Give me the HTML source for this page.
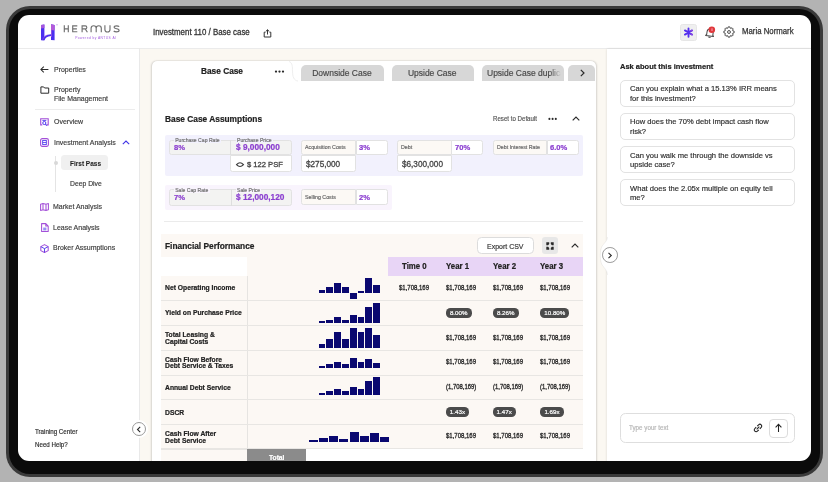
<!DOCTYPE html>
<html><head><meta charset="utf-8">
<style>
*{box-sizing:border-box;margin:0;padding:0}
html,body{width:828px;height:482px;overflow:hidden;background:#b3b3b3;font-family:"Liberation Sans",sans-serif;color:#2e2e2e}
.a{position:absolute}
.t{position:absolute;white-space:nowrap;line-height:1;-webkit-text-stroke:0.17px currentColor}
.t[style*="font-weight:700"]{-webkit-text-stroke:0.22px currentColor}
#ring{left:6px;top:6px;width:817px;height:471px;background:#3a3a3a;border-radius:24px}
#bezel{left:9px;top:9px;width:811px;height:465px;background:#0b0b0b;border-radius:21px}
#screen{left:0;top:0;width:828px;height:482px;background:#fff;will-change:transform;clip-path:inset(15px 17px 21px 18px round 11px)}
svg{position:absolute;overflow:visible}
</style></head><body>
<div id="ring" class="a"></div>
<div id="bezel" class="a"></div>
<div id="screen" class="a">
<div class="a" style="left:18px;top:48px;width:793px;height:1px;background:#ebebeb"></div>
<svg style="left:0;top:0" width="130" height="48" viewBox="0 0 130 48">
    <path d="M41 24.9 L44.4 24.4 L44.4 40.3 L41 40.3 Z" fill="#4b2ff0"/>
    <path d="M41 24.9 L44.4 24.4 L44.4 28 L41 28.4 Z" fill="#a655dc"/>
    <path d="M51 24.3 L54.6 24.9 L54.6 40.2 L51 40 Z" fill="#4b2ff0"/>
    <path d="M51 24.3 L54.6 24.9 L54.6 30.5 L51 30 Z" fill="#b45ad8"/>
    <path d="M51 30 L52 30 L52 37 L51 37 Z" fill="#8a4fe6"/>
    <path d="M42.3 40.2 C44 36.2 46.3 34.5 51 34.3 L51 35.9 C47.2 36.1 45.6 37.6 44.4 40.3 Z" fill="#4b2ff0"/>
    <path d="M42.5 39.6 C44 36.8 45.5 35.6 47.5 35" fill="none" stroke="#a655dc" stroke-width="0.6"/>
    <circle cx="57" cy="24.8" r="0.7" fill="#c9a5ea"/>
    <g fill="none" stroke="#707070" stroke-width="1.15" stroke-linecap="butt">
      <path d="M64.3 25.3 V32.3 M68.3 25.3 V32.3 M64.3 28.8 H68.3"/>
      <path d="M77.3 25.9 H72.7 V31.7 H77.3 M72.7 28.8 H76.9"/>
      <path d="M82.1 32.3 V25.9 H85.3 A1.5 1.5 0 0 1 85.3 28.9 H82.1 M85.2 28.9 L87.4 32.3"/>
      <path d="M91.1 32.3 V28.3 A2.55 2.55 0 0 1 96.2 28.3 V32.3 M96.2 28.3 A2.55 2.55 0 0 1 101.3 28.3 V32.3"/>
      <path d="M104.9 25.3 V29.4 A2.55 2.55 0 0 0 110 29.4 V25.3"/>
      <path d="M119.2 26.6 C118.6 26 117.7 25.8 116.5 25.8 C115 25.8 114.1 26.4 114.1 27.3 C114.1 28.4 115.2 28.6 116.6 28.8 C118.2 29 119.1 29.5 119.1 30.5 C119.1 31.4 118.2 31.9 116.5 31.9 C115.3 31.9 114.3 31.6 113.7 31"/>
    </g>
  </svg>
<div class="t" style="left:75.2px;top:36.6px;font-size:3.3px;color:#a45ee0;letter-spacing:0.42px;-webkit-text-stroke:0">Powered by ANTUS AI</div>
<div class="t" style="left:152.7px;top:28px;font-size:8.37px;transform:scaleX(0.9434);transform-origin:0 0;color:#333;-webkit-text-stroke:0.28px #333">Investment 110 / Base case</div>
<svg style="left:263px;top:28.5px" width="9" height="9" viewBox="0 0 9 9">
    <path d="M2.5 3.2 H1.2 V8 H7.8 V3.2 H6.5" fill="none" stroke="#333" stroke-width="1"/>
    <path d="M4.5 5.5 V0.8 M2.8 2.4 L4.5 0.8 L6.2 2.4" fill="none" stroke="#333" stroke-width="1"/>
  </svg>
<div class="a" style="left:680px;top:24px;width:17px;height:16.5px;background:#efefef;border-radius:2.5px;border:1px solid #e6e6e6"></div>
<svg style="left:682.6px;top:27px" width="11" height="11" viewBox="0 0 11 11">
    <g stroke="#5530ee" stroke-width="1.85" stroke-linecap="round">
      <path d="M5.5 1.3 V9.7 M1.9 3.4 L9.1 7.6 M1.9 7.6 L9.1 3.4"/>
    </g>
    <path d="M8 4 L9.1 3.4 M8 7 L9.1 7.6" stroke="#9048de" stroke-width="1.3" stroke-linecap="round"/>
  </svg>
  <svg style="left:703.5px;top:25.5px" width="13" height="13" viewBox="0 0 13 13">
    <g transform="rotate(8 6 7)">
    <path d="M2 10 H10 L9.1 8.8 V6.2 A3.1 3.1 0 0 0 2.9 6.2 V8.8 Z" fill="none" stroke="#444" stroke-width="1" stroke-linejoin="round"/>
    <path d="M4.9 11.3 H7.1" stroke="#444" stroke-width="1"/>
    </g>
    <circle cx="7.8" cy="3.7" r="3.3" fill="#e0393b"/>
    <path d="M8 2.3 V5" stroke="#fbd" stroke-width="0.8"/>
  </svg>
  <svg style="left:723.4px;top:26.1px" width="12" height="12" viewBox="0 0 12 12">
    <path d="M9.82 4.82 L11.13 5.17 L11.13 6.83 L9.82 7.18 L9.54 7.87 L10.22 9.04 L9.04 10.22 L7.87 9.54 L7.18 9.82 L6.83 11.13 L5.17 11.13 L4.82 9.82 L4.13 9.54 L2.96 10.22 L1.78 9.04 L2.46 7.87 L2.18 7.18 L0.87 6.83 L0.87 5.17 L2.18 4.82 L2.46 4.13 L1.78 2.96 L2.96 1.78 L4.13 2.46 L4.82 2.18 L5.17 0.87 L6.83 0.87 L7.18 2.18 L7.87 2.46 L9.04 1.78 L10.22 2.96 L9.54 4.13 Z" fill="none" stroke="#444" stroke-width="0.95" stroke-linejoin="round"/>
    <circle cx="6" cy="6" r="1.45" fill="none" stroke="#444" stroke-width="0.95"/>
  </svg>
<div class="t" style="left:741.9px;top:28px;font-size:8.27px;transform:scaleX(0.9434);transform-origin:0 0;color:#333;-webkit-text-stroke:0.25px #333">Maria Normark</div>
<div class="a" style="left:139px;top:48px;width:1px;height:414px;background:#e9e9e9"></div>
<svg style="left:39.5px;top:66px" width="9" height="7" viewBox="0 0 9 7">
    <path d="M8.4 3.5 H1 M3.8 0.6 L0.9 3.5 L3.8 6.4" fill="none" stroke="#2a2a2a" stroke-width="1.05"/>
  </svg>
<svg style="left:39.5px;top:86px" width="10" height="8" viewBox="0 0 10 8">
    <path d="M0.9 0.9 H3.6 L4.6 2 H8.7 V7.2 H0.9 Z" fill="none" stroke="#2a2a2a" stroke-width="1" stroke-linejoin="round"/>
  </svg>
<svg style="left:40px;top:117.5px" width="9" height="9" viewBox="0 0 9 9">
    <path d="M2.3 6.9 H0.7 V0.7 H8.2 V6.9 H6.9" fill="none" stroke="#a34fd8" stroke-width="1.1"/>
    <path d="M2.4 2.4 H6.3" stroke="#4a34ec" stroke-width="0.9"/>
    <circle cx="4.3" cy="5" r="1.55" fill="none" stroke="#4a34ec" stroke-width="0.95"/>
    <path d="M5.4 6.1 L6.9 7.7" stroke="#4a34ec" stroke-width="1.05"/>
  </svg>
<svg style="left:40px;top:138px" width="9" height="9" viewBox="0 0 9 9">
    <rect x="0.6" y="0.6" width="7.8" height="7.8" rx="1.6" fill="none" stroke="#a34fd8" stroke-width="1.1"/>
    <rect x="2.7" y="2.4" width="3.6" height="4.2" fill="none" stroke="#4a34ec" stroke-width="0.85"/><path d="M2.7 4.5 H6.3" stroke="#4a34ec" stroke-width="0.8"/>
  </svg>
<svg style="left:121.5px;top:140px" width="8" height="5" viewBox="0 0 8 5">
    <path d="M0.8 4.2 L4 1 L7.2 4.2" fill="none" stroke="#3f33e6" stroke-width="1.1"/>
  </svg>
<svg style="left:40px;top:202.5px" width="9" height="8" viewBox="0 0 9 8">
    <path d="M0.6 1.2 L3 0.6 L6 1.2 L8.4 0.6 V6.8 L6 7.4 L3 6.8 L0.6 7.4 Z M3 0.6 V6.8 M6 1.2 V7.4" fill="none" stroke="#a34fd8" stroke-width="1.05" stroke-linejoin="round"/>
  </svg>
<svg style="left:40.5px;top:222.5px" width="8" height="9" viewBox="0 0 8 9">
    <path d="M0.6 0.6 H4.8 L7.2 3 V8.4 H0.6 Z M4.8 0.6 V3 H7.2" fill="none" stroke="#a34fd8" stroke-width="1.05" stroke-linejoin="round"/>
    <path d="M2.2 5.2 H5.4 M2.2 6.8 H5.4" stroke="#4a34ec" stroke-width="0.8"/>
  </svg>
<svg style="left:40px;top:243.5px" width="9" height="9" viewBox="0 0 9 9">
    <path d="M4.5 0.6 L8.2 2.6 V6.6 L4.5 8.5 L0.8 6.6 V2.6 Z" fill="none" stroke="#a34fd8" stroke-width="1.05" stroke-linejoin="round"/>
    <path d="M0.9 2.7 L4.5 4.6 L8.1 2.7 M4.5 4.6 V8.4" fill="none" stroke="#4a34ec" stroke-width="0.9"/>
  </svg>
<div class="t" style="left:53.5px;top:66px;font-size:7.42px;transform:scaleX(0.9434);transform-origin:0 0;color:#3d3d3d">Properties</div>
<div class="t" style="left:53.5px;top:86px;font-size:7.42px;transform:scaleX(0.9434);transform-origin:0 0;color:#3d3d3d">Property</div>
<div class="t" style="left:53.5px;top:95px;font-size:7.42px;transform:scaleX(0.9434);transform-origin:0 0;color:#3d3d3d">File Management</div>
<div class="a" style="left:35px;top:109px;width:100px;height:1px;background:#ececec"></div>
<div class="t" style="left:53.5px;top:118px;font-size:7.42px;transform:scaleX(0.9434);transform-origin:0 0;color:#3d3d3d">Overview</div>
<div class="t" style="left:53.5px;top:139px;font-size:7.42px;transform:scaleX(0.9434);transform-origin:0 0;color:#3d3d3d">Investment Analysis</div>
<div class="a" style="left:55px;top:155.5px;width:1px;height:36px;background:#e4e4e4"></div>
<div class="a" style="left:53.5px;top:161px;width:4px;height:4px;border-radius:50%;background:#d8d8d8"></div>
<div class="a" style="left:61.3px;top:155.3px;width:47.2px;height:15.2px;border-radius:3.5px;background:#f0f0f0"></div>
<div class="t" style="left:69.9px;top:161px;font-size:6.89px;transform:scaleX(0.9434);transform-origin:0 0;font-weight:700;color:#222;-webkit-text-stroke:0.05px #222">First Pass</div>
<div class="t" style="left:69.9px;top:180px;font-size:7.21px;transform:scaleX(0.9434);transform-origin:0 0;color:#3a3a3a">Deep Dive</div>
<div class="t" style="left:53.2px;top:203px;font-size:7.42px;transform:scaleX(0.9434);transform-origin:0 0;color:#3d3d3d">Market Analysis</div>
<div class="t" style="left:53.2px;top:224px;font-size:7.42px;transform:scaleX(0.9434);transform-origin:0 0;color:#3d3d3d">Lease Analysis</div>
<div class="t" style="left:53.2px;top:244px;font-size:7.42px;transform:scaleX(0.9434);transform-origin:0 0;color:#3d3d3d">Broker Assumptions</div>
<div class="t" style="left:35.1px;top:429px;font-size:6.57px;transform:scaleX(0.9434);transform-origin:0 0;">Training Center</div>
<div class="t" style="left:35.1px;top:442px;font-size:6.57px;transform:scaleX(0.9434);transform-origin:0 0;">Need Help?</div>
<div class="a" style="left:140px;top:49px;width:467px;height:413px;background:#fbf8f2"></div>
<div class="a" style="left:152px;top:61px;width:443.5px;height:420px;background:#fff;border-radius:5px;box-shadow:-1px 0 2px rgba(0,0,0,0.14),1px 0 2px rgba(0,0,0,0.14),0 0 1px rgba(0,0,0,0.06)"></div>
<svg style="left:285px;top:61px" width="16" height="21" viewBox="0 0 16 21"><path d="M4 0.5 C7.5 1.5 7.5 6 7.5 10 C7.5 16 9 19.5 13 20" fill="none" stroke="#efefef" stroke-width="1"/></svg>
<div class="t" style="left:200.9px;top:67px;font-size:8.8px;transform:scaleX(0.9434);transform-origin:0 0;font-weight:700;color:#222">Base Case</div>
<svg style="left:270px;top:66px" width="20" height="12" viewBox="0 0 20 12"><g fill="#2a2a2a"><circle cx="6" cy="5.6" r="1.15"/><circle cx="9.5" cy="5.6" r="1.15"/><circle cx="13" cy="5.6" r="1.15"/></g></svg>
<div class="a" style="left:301px;top:64.5px;width:83.0px;height:16.5px;background:#d7d7d7;border-radius:5px 5px 0 0;overflow:hidden"><div class="t" style="left:11.2px;top:4.5px;font-size:8.5px;color:#484848;">Downside Case</div></div>
<div class="a" style="left:391.6px;top:64.5px;width:82.4px;height:16.5px;background:#d7d7d7;border-radius:5px 5px 0 0;overflow:hidden"><div class="t" style="left:16.3px;top:4.5px;font-size:8.5px;color:#484848;">Upside Case</div></div>
<div class="a" style="left:482px;top:64.5px;width:82.3px;height:16.5px;background:#d7d7d7;border-radius:5px 5px 0 0;overflow:hidden"><div class="t" style="left:5.0px;top:4.5px;font-size:8.5px;color:#484848;-webkit-mask-image:linear-gradient(90deg,#000 85%,transparent 100%);width:74px;overflow:hidden;">Upside Case duplicate</div></div>
<div class="a" style="left:568.2px;top:64.5px;width:27.1px;height:16.5px;background:#d7d7d7;border-radius:5px 5px 0 0;overflow:hidden"></div>
<svg style="left:578.5px;top:68.5px" width="7" height="8" viewBox="0 0 7 8"><path d="M1.8 0.9 L5 4 L1.8 7.1" fill="none" stroke="#2a2a2a" stroke-width="1.2"/></svg>
<div class="t" style="left:164.8px;top:115px;font-size:8.86px;transform:scaleX(0.9434);transform-origin:0 0;font-weight:700;color:#222">Base Case Assumptions</div>
<div class="t" style="left:493.2px;top:116px;font-size:6.51px;transform:scaleX(0.9434);transform-origin:0 0;color:#555">Reset to Default</div>
<svg style="left:545px;top:114px" width="16" height="10" viewBox="0 0 16 10"><g fill="#2a2a2a"><circle cx="4.4" cy="4.9" r="1.05"/><circle cx="7.6" cy="4.9" r="1.05"/><circle cx="10.8" cy="4.9" r="1.05"/></g></svg>
<svg style="left:571.5px;top:116px" width="8" height="5" viewBox="0 0 8 5"><path d="M0.7 4.4 L4 1.1 L7.3 4.4" fill="none" stroke="#2a2a2a" stroke-width="1.15"/></svg>
<div class="a" style="left:164.7px;top:135px;width:418.5px;height:41px;background:#f2f1fd;border-radius:2px"></div>
<div class="a" style="left:165px;top:185px;width:227px;height:24.5px;background:#f9f4fd;border-radius:2px"></div>
<div class="a" style="left:168.5px;top:139.6px;width:123.7px;height:15.8px;background:#f3f3f2;border:0.8px solid #e2e2e2;border-radius:2.5px"></div>
<div class="a" style="left:230.2px;top:139.6px;width:0.8px;height:15.8px;background:#dedede"></div>
<div class="a" style="left:230.2px;top:155px;width:62.0px;height:17.3px;background:#fff;border:0.8px solid #e2e2e2;border-radius:0 0 2.5px 2.5px"></div>
<div class="t" style="left:174.0px;top:138px;font-size:5.1px;color:#6e6e6e;background:#f2f1fd;padding:0 1.2px">Purchase Cap Rate</div>
<div class="t" style="left:235.8px;top:138px;font-size:5.1px;color:#6e6e6e;background:#f2f1fd;padding:0 1.2px">Purchase Price</div>
<div class="t" style="left:173.9px;top:144px;font-size:8.06px;transform:scaleX(0.9434);transform-origin:0 0;font-weight:700;color:#8b3fd0">8%</div>
<div class="t" style="left:235.8px;top:143px;font-size:8.8px;transform:scaleX(0.9434);transform-origin:0 0;font-weight:700;color:#8b3fd0">$ 9,000,000</div>
<svg style="left:235.8px;top:161.6px" width="8" height="6" viewBox="0 0 8 6"><path d="M0.5 2.6 Q4 -1.2 7.5 2.6 Q4 6.4 0.5 2.6 Z" fill="none" stroke="#3a3a3a" stroke-width="1.1" stroke-linejoin="miter"/></svg>
<div class="t" style="left:247px;top:161px;font-size:8.06px;transform:scaleX(0.9434);transform-origin:0 0;color:#454545;-webkit-text-stroke:0.3px #454545">$ 122 PSF</div>
<div class="a" style="left:301px;top:139.6px;width:55.4px;height:15.8px;background:#fcf9f5;border:0.8px solid #e2e2e2;border-radius:2.5px 0 0 2.5px"></div>
<div class="a" style="left:355.6px;top:139.6px;width:32.1px;height:15.8px;background:#fff;border:0.8px solid #e2e2e2;border-radius:0 2.5px 2.5px 0"></div>
<div class="t" style="left:304.9px;top:145px;font-size:5.62px;transform:scaleX(0.9434);transform-origin:0 0;color:#666">Acquisition Costs</div>
<div class="t" style="left:359.3px;top:144px;font-size:8.06px;transform:scaleX(0.9434);transform-origin:0 0;font-weight:700;color:#8b3fd0">3%</div>
<div class="a" style="left:301px;top:154.6px;width:55.4px;height:17.7px;background:#fff;border:0.8px solid #e2e2e2;border-radius:0 0 2.5px 2.5px"></div>
<div class="t" style="left:306px;top:160px;font-size:8.69px;transform:scaleX(0.9434);transform-origin:0 0;color:#454545;-webkit-text-stroke:0.3px #454545">$275,000</div>
<div class="a" style="left:396.8px;top:139.6px;width:54.9px;height:15.8px;background:#fcf9f5;border:0.8px solid #e2e2e2;border-radius:2.5px 0 0 2.5px"></div>
<div class="a" style="left:450.9px;top:139.6px;width:32.6px;height:15.8px;background:#fff;border:0.8px solid #e2e2e2;border-radius:0 2.5px 2.5px 0"></div>
<div class="t" style="left:400.7px;top:145px;font-size:5.62px;transform:scaleX(0.9434);transform-origin:0 0;color:#666">Debt</div>
<div class="t" style="left:454.59999999999997px;top:144px;font-size:8.06px;transform:scaleX(0.9434);transform-origin:0 0;font-weight:700;color:#8b3fd0">70%</div>
<div class="a" style="left:396.8px;top:154.6px;width:54.9px;height:17.7px;background:#fff;border:0.8px solid #e2e2e2;border-radius:0 0 2.5px 2.5px"></div>
<div class="t" style="left:401.8px;top:160px;font-size:8.69px;transform:scaleX(0.9434);transform-origin:0 0;color:#454545;-webkit-text-stroke:0.3px #454545">$6,300,000</div>
<div class="a" style="left:492.7px;top:139.6px;width:54.6px;height:15.8px;background:#fcf9f5;border:0.8px solid #e2e2e2;border-radius:2.5px 0 0 2.5px"></div>
<div class="a" style="left:546.5px;top:139.6px;width:32.6px;height:15.8px;background:#fff;border:0.8px solid #e2e2e2;border-radius:0 2.5px 2.5px 0"></div>
<div class="t" style="left:496.59999999999997px;top:145px;font-size:5.62px;transform:scaleX(0.9434);transform-origin:0 0;color:#666">Debt Interest Rate</div>
<div class="t" style="left:550.2px;top:144px;font-size:8.06px;transform:scaleX(0.9434);transform-origin:0 0;font-weight:700;color:#8b3fd0">6.0%</div>
<div class="a" style="left:168.7px;top:189.3px;width:123.8px;height:16.3px;background:#f3f3f2;border:0.8px solid #e2e2e2;border-radius:2.5px"></div>
<div class="a" style="left:230.6px;top:189.3px;width:0.8px;height:16.3px;background:#dedede"></div>
<div class="t" style="left:174.0px;top:188px;font-size:5.1px;color:#6e6e6e;background:#f9f4fd;padding:0 1.2px">Sale Cap Rate</div>
<div class="t" style="left:235.8px;top:188px;font-size:5.1px;color:#6e6e6e;background:#f9f4fd;padding:0 1.2px">Sale Price</div>
<div class="t" style="left:173.8px;top:194px;font-size:8.06px;transform:scaleX(0.9434);transform-origin:0 0;font-weight:700;color:#8b3fd0">7%</div>
<div class="t" style="left:235.8px;top:193px;font-size:8.8px;transform:scaleX(0.9434);transform-origin:0 0;font-weight:700;color:#8b3fd0">$ 12,000,120</div>
<div class="a" style="left:300.6px;top:189.3px;width:55.9px;height:16.2px;background:#fcf9f5;border:0.8px solid #e2e2e2;border-radius:2.5px 0 0 2.5px"></div>
<div class="a" style="left:355.7px;top:189.3px;width:32.4px;height:16.2px;background:#fff;border:0.8px solid #e2e2e2;border-radius:0 2.5px 2.5px 0"></div>
<div class="t" style="left:304.5px;top:195px;font-size:5.62px;transform:scaleX(0.9434);transform-origin:0 0;color:#666">Selling Costs</div>
<div class="t" style="left:359.4px;top:194px;font-size:8.06px;transform:scaleX(0.9434);transform-origin:0 0;font-weight:700;color:#8b3fd0">2%</div>
<div class="a" style="left:164px;top:221px;width:419px;height:1px;background:#ebebeb"></div>
<div class="a" style="left:161.2px;top:233.7px;width:422px;height:23.4px;background:#fcf8f4"></div>
<div class="t" style="left:165.4px;top:242px;font-size:8.86px;transform:scaleX(0.9434);transform-origin:0 0;font-weight:700;color:#222">Financial Performance</div>
<div class="a" style="left:477px;top:236.6px;width:57.1px;height:17.8px;background:#fff;border:0.8px solid #dcdcdc;border-radius:4.5px"></div>
<div class="t" style="left:487px;top:243px;font-size:7.41px;transform:scaleX(0.9434);transform-origin:0 0;color:#333">Export CSV</div>
<div class="a" style="left:542px;top:237.4px;width:16px;height:16.6px;background:#e7e7e7;border-radius:3px"></div>
<svg style="left:546px;top:241.5px" width="8" height="8" viewBox="0 0 8 8"><g fill="#2a2a2a"><path d="M0.3 0.3 H3.2 V2.1 L2.1 3.2 H0.3 Z"/><path d="M7.7 0.3 H4.8 V2.1 L5.9 3.2 H7.7 Z"/><path d="M0.3 7.7 H3.2 V5.9 L2.1 4.8 H0.3 Z"/><path d="M7.7 7.7 H4.8 V5.9 L5.9 4.8 H7.7 Z"/></g></svg>
<svg style="left:571px;top:243.2px" width="8" height="5" viewBox="0 0 8 5"><path d="M0.7 4.4 L4 1.1 L7.3 4.4" fill="none" stroke="#2a2a2a" stroke-width="1.15"/></svg>
<div class="a" style="left:161.2px;top:257px;width:422px;height:192px;background:#fcf8f4"></div>
<div class="a" style="left:161.2px;top:257px;width:86.2px;height:19px;background:#fff"></div>
<div class="a" style="left:388px;top:257.1px;width:195.2px;height:18.6px;background:#e8d5f6"></div>
<div class="t" style="left:401.8px;top:262px;font-size:8.31px;transform:scaleX(0.9434);transform-origin:0 0;font-weight:700;color:#222">Time 0</div>
<div class="t" style="left:445.6px;top:262px;font-size:8.31px;transform:scaleX(0.9434);transform-origin:0 0;font-weight:700;color:#222">Year 1</div>
<div class="t" style="left:492.9px;top:262px;font-size:8.31px;transform:scaleX(0.9434);transform-origin:0 0;font-weight:700;color:#222">Year 2</div>
<div class="t" style="left:540.2px;top:262px;font-size:8.31px;transform:scaleX(0.9434);transform-origin:0 0;font-weight:700;color:#222">Year 3</div>
<div class="a" style="left:247px;top:276px;width:0.8px;height:186px;background:#e6e4e1"></div>
<div class="a" style="left:161.2px;top:300.2px;width:422px;height:0.9px;background:#e8e6e3"></div>
<div class="a" style="left:161.2px;top:324.8px;width:422px;height:0.9px;background:#e8e6e3"></div>
<div class="a" style="left:161.2px;top:349.9px;width:422px;height:0.9px;background:#e8e6e3"></div>
<div class="a" style="left:161.2px;top:374.5px;width:422px;height:0.9px;background:#e8e6e3"></div>
<div class="a" style="left:161.2px;top:398.6px;width:422px;height:0.9px;background:#e8e6e3"></div>
<div class="a" style="left:161.2px;top:423.9px;width:422px;height:0.9px;background:#e8e6e3"></div>
<div class="a" style="left:161.2px;top:448.3px;width:422px;height:0.9px;background:#e8e6e3"></div>
<div class="t" style="left:165px;top:285px;font-size:7.16px;transform:scaleX(0.9434);transform-origin:0 0;font-weight:700;color:#222">Net Operating Income</div>
<div class="t" style="left:165px;top:310px;font-size:7.16px;transform:scaleX(0.9434);transform-origin:0 0;font-weight:700;color:#222">Yield on Purchase Price</div>
<div class="t" style="left:165px;top:332px;font-size:7.16px;transform:scaleX(0.9434);transform-origin:0 0;font-weight:700;color:#222">Total Leasing &amp;</div>
<div class="t" style="left:165px;top:339px;font-size:7.16px;transform:scaleX(0.9434);transform-origin:0 0;font-weight:700;color:#222">Capital Costs</div>
<div class="t" style="left:165px;top:357px;font-size:7.16px;transform:scaleX(0.9434);transform-origin:0 0;font-weight:700;color:#222">Cash Flow Before</div>
<div class="t" style="left:165px;top:363px;font-size:7.16px;transform:scaleX(0.9434);transform-origin:0 0;font-weight:700;color:#222">Debt Service &amp; Taxes</div>
<div class="t" style="left:165px;top:385px;font-size:7.16px;transform:scaleX(0.9434);transform-origin:0 0;font-weight:700;color:#222">Annual Debt Service</div>
<div class="t" style="left:165px;top:410px;font-size:7.16px;transform:scaleX(0.9434);transform-origin:0 0;font-weight:700;color:#222">DSCR</div>
<div class="t" style="left:165px;top:431px;font-size:7.16px;transform:scaleX(0.9434);transform-origin:0 0;font-weight:700;color:#222">Cash Flow After</div>
<div class="t" style="left:165px;top:438px;font-size:7.16px;transform:scaleX(0.9434);transform-origin:0 0;font-weight:700;color:#222">Debt Service</div>
<div class="t" style="left:399.4px;top:285px;font-size:6.36px;transform:scaleX(0.9434);transform-origin:0 0;color:#2a2a2a;-webkit-text-stroke:0.3px #2a2a2a">$1,708,169</div>
<div class="t" style="left:445.7px;top:285px;font-size:6.36px;transform:scaleX(0.9434);transform-origin:0 0;color:#2a2a2a;-webkit-text-stroke:0.3px #2a2a2a">$1,708,169</div>
<div class="t" style="left:492.7px;top:285px;font-size:6.36px;transform:scaleX(0.9434);transform-origin:0 0;color:#2a2a2a;-webkit-text-stroke:0.3px #2a2a2a">$1,708,169</div>
<div class="t" style="left:540.2px;top:285px;font-size:6.36px;transform:scaleX(0.9434);transform-origin:0 0;color:#2a2a2a;-webkit-text-stroke:0.3px #2a2a2a">$1,708,169</div>
<div class="t" style="left:445.7px;top:335px;font-size:6.36px;transform:scaleX(0.9434);transform-origin:0 0;color:#2a2a2a;-webkit-text-stroke:0.3px #2a2a2a">$1,708,169</div>
<div class="t" style="left:492.7px;top:335px;font-size:6.36px;transform:scaleX(0.9434);transform-origin:0 0;color:#2a2a2a;-webkit-text-stroke:0.3px #2a2a2a">$1,708,169</div>
<div class="t" style="left:540.2px;top:335px;font-size:6.36px;transform:scaleX(0.9434);transform-origin:0 0;color:#2a2a2a;-webkit-text-stroke:0.3px #2a2a2a">$1,708,169</div>
<div class="t" style="left:445.7px;top:359px;font-size:6.36px;transform:scaleX(0.9434);transform-origin:0 0;color:#2a2a2a;-webkit-text-stroke:0.3px #2a2a2a">$1,708,169</div>
<div class="t" style="left:492.7px;top:359px;font-size:6.36px;transform:scaleX(0.9434);transform-origin:0 0;color:#2a2a2a;-webkit-text-stroke:0.3px #2a2a2a">$1,708,169</div>
<div class="t" style="left:540.2px;top:359px;font-size:6.36px;transform:scaleX(0.9434);transform-origin:0 0;color:#2a2a2a;-webkit-text-stroke:0.3px #2a2a2a">$1,708,169</div>
<div class="t" style="left:445.7px;top:433px;font-size:6.36px;transform:scaleX(0.9434);transform-origin:0 0;color:#2a2a2a;-webkit-text-stroke:0.3px #2a2a2a">$1,708,169</div>
<div class="t" style="left:492.7px;top:433px;font-size:6.36px;transform:scaleX(0.9434);transform-origin:0 0;color:#2a2a2a;-webkit-text-stroke:0.3px #2a2a2a">$1,708,169</div>
<div class="t" style="left:540.2px;top:433px;font-size:6.36px;transform:scaleX(0.9434);transform-origin:0 0;color:#2a2a2a;-webkit-text-stroke:0.3px #2a2a2a">$1,708,169</div>
<div class="t" style="left:445.7px;top:384px;font-size:6.28px;transform:scaleX(0.9434);transform-origin:0 0;color:#2a2a2a;-webkit-text-stroke:0.3px #2a2a2a">(1,708,169)</div>
<div class="t" style="left:492.7px;top:384px;font-size:6.28px;transform:scaleX(0.9434);transform-origin:0 0;color:#2a2a2a;-webkit-text-stroke:0.3px #2a2a2a">(1,708,169)</div>
<div class="t" style="left:540.2px;top:384px;font-size:6.28px;transform:scaleX(0.9434);transform-origin:0 0;color:#2a2a2a;-webkit-text-stroke:0.3px #2a2a2a">(1,708,169)</div>
<div class="a" style="left:445.7px;top:307.9px;width:26px;height:10.4px;background:#4b4b4b;border-radius:4.5px;color:#fff;font-size:6.2px;-webkit-text-stroke:0.2px #fff;line-height:10.4px;text-align:center;white-space:nowrap">8.00%</div>
<div class="a" style="left:492.7px;top:307.9px;width:26px;height:10.4px;background:#4b4b4b;border-radius:4.5px;color:#fff;font-size:6.2px;-webkit-text-stroke:0.2px #fff;line-height:10.4px;text-align:center;white-space:nowrap">8.26%</div>
<div class="a" style="left:540.2px;top:307.9px;width:29.3px;height:10.4px;background:#4b4b4b;border-radius:4.5px;color:#fff;font-size:6.2px;-webkit-text-stroke:0.2px #fff;line-height:10.4px;text-align:center;white-space:nowrap">10.80%</div>
<div class="a" style="left:445.7px;top:407px;width:23.5px;height:10.3px;background:#4b4b4b;border-radius:4.5px;color:#fff;font-size:6.2px;-webkit-text-stroke:0.2px #fff;line-height:10.3px;text-align:center;white-space:nowrap">1.43x</div>
<div class="a" style="left:492.7px;top:407px;width:23px;height:10.3px;background:#4b4b4b;border-radius:4.5px;color:#fff;font-size:6.2px;-webkit-text-stroke:0.2px #fff;line-height:10.3px;text-align:center;white-space:nowrap">1.47x</div>
<div class="a" style="left:540.2px;top:407px;width:23.6px;height:10.3px;background:#4b4b4b;border-radius:4.5px;color:#fff;font-size:6.2px;-webkit-text-stroke:0.2px #fff;line-height:10.3px;text-align:center;white-space:nowrap">1.69x</div>
<div class="a" style="left:318.6px;top:289.8px;width:6.9px;height:3px;background:#0a0870"></div>
<div class="a" style="left:326.38px;top:287.4px;width:6.9px;height:5.4px;background:#0a0870"></div>
<div class="a" style="left:334.16px;top:282.8px;width:6.9px;height:10px;background:#0a0870"></div>
<div class="a" style="left:341.94px;top:287.4px;width:6.9px;height:5.4px;background:#0a0870"></div>
<div class="a" style="left:349.72px;top:292.8px;width:6.9px;height:6px;background:#0a0870"></div>
<div class="a" style="left:357.5px;top:290.8px;width:6.9px;height:2px;background:#0a0870"></div>
<div class="a" style="left:365.28px;top:278.1px;width:6.9px;height:14.7px;background:#0a0870"></div>
<div class="a" style="left:373.06px;top:285.2px;width:6.9px;height:7.6px;background:#0a0870"></div>
<div class="a" style="left:318.6px;top:321.0px;width:6.9px;height:2.3px;background:#0a0870"></div>
<div class="a" style="left:326.38px;top:319.8px;width:6.9px;height:3.5px;background:#0a0870"></div>
<div class="a" style="left:334.16px;top:317.0px;width:6.9px;height:6.3px;background:#0a0870"></div>
<div class="a" style="left:341.94px;top:319.8px;width:6.9px;height:3.5px;background:#0a0870"></div>
<div class="a" style="left:349.72px;top:314.6px;width:6.9px;height:8.7px;background:#0a0870"></div>
<div class="a" style="left:357.5px;top:317.0px;width:6.9px;height:6.3px;background:#0a0870"></div>
<div class="a" style="left:365.28px;top:306.7px;width:6.9px;height:16.6px;background:#0a0870"></div>
<div class="a" style="left:373.06px;top:303.0px;width:6.9px;height:20.3px;background:#0a0870"></div>
<div class="a" style="left:318.6px;top:343.8px;width:6.9px;height:4.1px;background:#0a0870"></div>
<div class="a" style="left:326.38px;top:339.1px;width:6.9px;height:8.8px;background:#0a0870"></div>
<div class="a" style="left:334.16px;top:331.6px;width:6.9px;height:16.3px;background:#0a0870"></div>
<div class="a" style="left:341.94px;top:339.1px;width:6.9px;height:8.8px;background:#0a0870"></div>
<div class="a" style="left:349.72px;top:327.9px;width:6.9px;height:20px;background:#0a0870"></div>
<div class="a" style="left:357.5px;top:331.6px;width:6.9px;height:16.3px;background:#0a0870"></div>
<div class="a" style="left:365.28px;top:327.9px;width:6.9px;height:20px;background:#0a0870"></div>
<div class="a" style="left:373.06px;top:335.3px;width:6.9px;height:12.6px;background:#0a0870"></div>
<div class="a" style="left:318.6px;top:365.7px;width:6.9px;height:2px;background:#0a0870"></div>
<div class="a" style="left:326.38px;top:364.4px;width:6.9px;height:3.3px;background:#0a0870"></div>
<div class="a" style="left:334.16px;top:362.0px;width:6.9px;height:5.7px;background:#0a0870"></div>
<div class="a" style="left:341.94px;top:364.4px;width:6.9px;height:3.3px;background:#0a0870"></div>
<div class="a" style="left:349.72px;top:358.2px;width:6.9px;height:9.5px;background:#0a0870"></div>
<div class="a" style="left:357.5px;top:362.0px;width:6.9px;height:5.7px;background:#0a0870"></div>
<div class="a" style="left:365.28px;top:359.0px;width:6.9px;height:8.7px;background:#0a0870"></div>
<div class="a" style="left:373.06px;top:363.2px;width:6.9px;height:4.5px;background:#0a0870"></div>
<div class="a" style="left:318.6px;top:392.8px;width:6.9px;height:2px;background:#0a0870"></div>
<div class="a" style="left:326.38px;top:391.4px;width:6.9px;height:3.4px;background:#0a0870"></div>
<div class="a" style="left:334.16px;top:389.0px;width:6.9px;height:5.8px;background:#0a0870"></div>
<div class="a" style="left:341.94px;top:391.4px;width:6.9px;height:3.4px;background:#0a0870"></div>
<div class="a" style="left:349.72px;top:387.3px;width:6.9px;height:7.5px;background:#0a0870"></div>
<div class="a" style="left:357.5px;top:389.0px;width:6.9px;height:5.8px;background:#0a0870"></div>
<div class="a" style="left:365.28px;top:380.6px;width:6.9px;height:14.2px;background:#0a0870"></div>
<div class="a" style="left:373.06px;top:377.3px;width:6.9px;height:17.5px;background:#0a0870"></div>
<div class="a" style="left:308.8px;top:439.7px;width:9.1px;height:2.1px;background:#0a0870"></div>
<div class="a" style="left:319.0px;top:438.0px;width:9.1px;height:3.8px;background:#0a0870"></div>
<div class="a" style="left:329.2px;top:435.9px;width:9.1px;height:5.9px;background:#0a0870"></div>
<div class="a" style="left:339.4px;top:438.6px;width:9.1px;height:3.2px;background:#0a0870"></div>
<div class="a" style="left:349.6px;top:431.8px;width:9.1px;height:10px;background:#0a0870"></div>
<div class="a" style="left:359.8px;top:435.9px;width:9.1px;height:5.9px;background:#0a0870"></div>
<div class="a" style="left:370.0px;top:432.9px;width:9.1px;height:8.9px;background:#0a0870"></div>
<div class="a" style="left:380.2px;top:437.0px;width:9.1px;height:4.8px;background:#0a0870"></div>
<div class="a" style="left:161.2px;top:449px;width:422px;height:14px;background:#fff"></div>
<div class="a" style="left:161.2px;top:449px;width:86.2px;height:14px;background:#fcf8f4"></div>
<div class="a" style="left:247.3px;top:449px;width:58.4px;height:14px;background:#8b8b8b"></div>
<div class="t" style="left:269px;top:454px;font-size:7.05px;transform:scaleX(0.9434);transform-origin:0 0;font-weight:700;color:#fff">Total</div>
<div class="a" style="left:161.2px;top:448.6px;width:86.2px;height:0.9px;background:#e8e6e3"></div>
<div class="a" style="left:131.5px;top:421.9px;width:14.6px;height:14.6px;border-radius:50%;background:#fff;border:0.9px solid #9a9a9a;box-shadow:0 0 0 2px #fff"></div>
<svg style="left:135.5px;top:426px" width="6" height="7" viewBox="0 0 6 7"><path d="M4.2 0.8 L1.5 3.5 L4.2 6.2" fill="none" stroke="#2a2a2a" stroke-width="1.1"/></svg>
<div class="a" style="left:607px;top:49px;width:204px;height:413px;background:#fff;box-shadow:-0.5px 0 2.5px rgba(0,0,0,0.14)"></div>
<svg style="left:590px;top:236px" width="20" height="40" viewBox="0 0 20 40"><path d="M17.5 0 C17.5 6 12 8 11 13 C10 17 10 22 11 26 C12 31 17.5 33 17.5 40 L20 40 L20 0 Z" fill="#fff"/><path d="M17.5 1 C17.5 6 12 8 11 13 C10 17 10 22 11 26 C12 31 17.5 33 17.5 39" fill="none" stroke="rgba(0,0,0,0.07)" stroke-width="0.8"/></svg>
<div class="a" style="left:602.1px;top:247.4px;width:15.8px;height:15.8px;border-radius:50%;background:#fff;border:0.9px solid #9a9a9a"></div>
<svg style="left:606.8px;top:251.8px" width="6" height="7" viewBox="0 0 6 7"><path d="M1.5 0.8 L4.3 3.5 L1.5 6.2" fill="none" stroke="#2a2a2a" stroke-width="1.1"/></svg>
<div class="t" style="left:620.3px;top:63px;font-size:7.95px;transform:scaleX(0.9434);transform-origin:0 0;font-weight:700;color:#222">Ask about this investment</div>
<div class="a" style="left:620.3px;top:79.7px;width:174.5px;height:27.8px;background:#fff;border:0.9px solid #e2e2e2;border-radius:5px"></div>
<div class="t" style="left:629.6px;top:85px;font-size:8.06px;transform:scaleX(0.9434);transform-origin:0 0;color:#2e2e2e">Can you explain what a 15.13% IRR means</div>
<div class="t" style="left:629.6px;top:95px;font-size:8.06px;transform:scaleX(0.9434);transform-origin:0 0;color:#2e2e2e">for this investment?</div>
<div class="a" style="left:620.3px;top:112.8px;width:174.5px;height:27.7px;background:#fff;border:0.9px solid #e2e2e2;border-radius:5px"></div>
<div class="t" style="left:629.6px;top:118px;font-size:8.06px;transform:scaleX(0.9434);transform-origin:0 0;color:#2e2e2e">How does the 70% debt impact cash flow</div>
<div class="t" style="left:629.6px;top:128px;font-size:8.06px;transform:scaleX(0.9434);transform-origin:0 0;color:#2e2e2e">risk?</div>
<div class="a" style="left:620.3px;top:146px;width:174.5px;height:27.4px;background:#fff;border:0.9px solid #e2e2e2;border-radius:5px"></div>
<div class="t" style="left:629.6px;top:152px;font-size:8.06px;transform:scaleX(0.9434);transform-origin:0 0;color:#2e2e2e">Can you walk me through the downside vs</div>
<div class="t" style="left:629.6px;top:161px;font-size:8.06px;transform:scaleX(0.9434);transform-origin:0 0;color:#2e2e2e">upside case?</div>
<div class="a" style="left:620.3px;top:179.2px;width:174.5px;height:27.2px;background:#fff;border:0.9px solid #e2e2e2;border-radius:5px"></div>
<div class="t" style="left:629.6px;top:185px;font-size:8.06px;transform:scaleX(0.9434);transform-origin:0 0;color:#2e2e2e">What does the 2.05x multiple on equity tell</div>
<div class="t" style="left:629.6px;top:194px;font-size:8.06px;transform:scaleX(0.9434);transform-origin:0 0;color:#2e2e2e">me?</div>
<div class="a" style="left:620.3px;top:413.4px;width:174.8px;height:29.4px;background:#fff;border:0.9px solid #dedede;border-radius:5.5px"></div>
<div class="t" style="left:628.7px;top:425px;font-size:6.64px;transform:scaleX(0.9434);transform-origin:0 0;color:#b5b5b5">Type your text</div>
<svg style="left:753px;top:423px" width="10" height="10" viewBox="0 0 10 10"><g fill="none" stroke="#222" stroke-width="1.05"><path d="M4.2 3.2 L5.6 1.8 A1.6 1.6 0 0 1 8.2 4.4 L6.8 5.8"/><path d="M5.8 6.8 L4.4 8.2 A1.6 1.6 0 0 1 1.8 5.6 L3.2 4.2"/><path d="M3.7 6.3 L6.3 3.7"/></g></svg>
<div class="a" style="left:768.7px;top:418.5px;width:19px;height:19px;background:#fff;border:0.9px solid #dcdcdc;border-radius:4px"></div>
<svg style="left:774px;top:423px" width="9" height="10" viewBox="0 0 9 10"><path d="M4.5 8.9 V1.4 M1.6 4.3 L4.5 1.3 L7.4 4.3" fill="none" stroke="#222" stroke-width="1.05"/></svg>
</div>
</body></html>
